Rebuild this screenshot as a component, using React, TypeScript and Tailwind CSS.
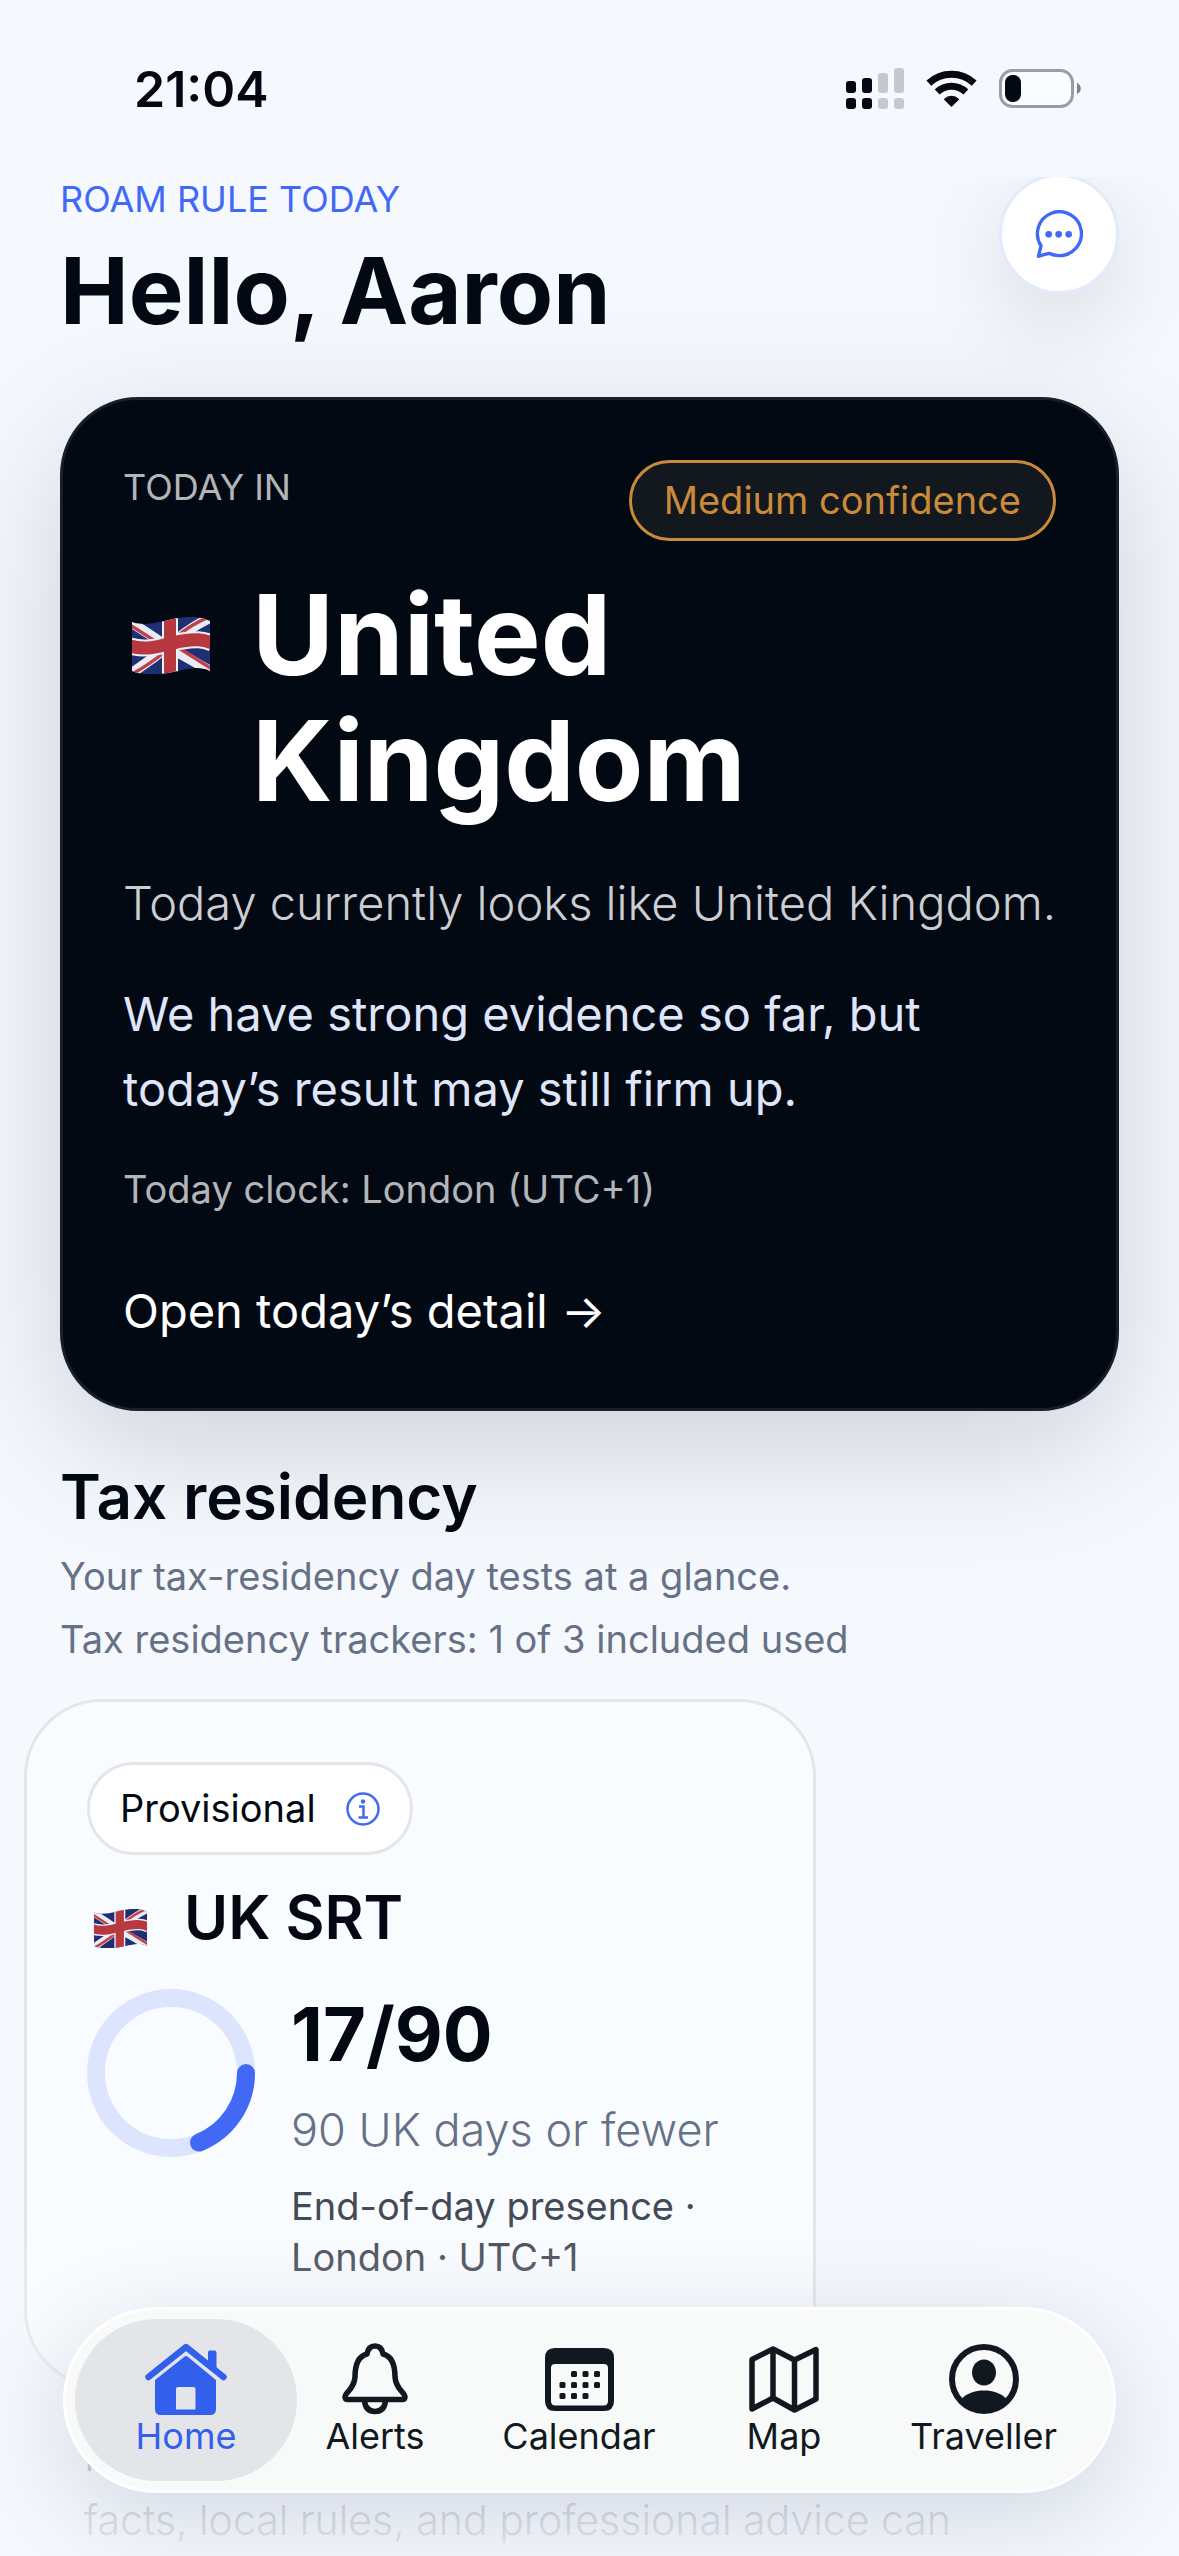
import type { ReactNode } from 'react'

type NavItem = {
  label: string
  href: string
  icon: ReactNode
  active?: boolean
}

const SignalIcon = () => (
  <svg viewBox="0 0 174 123" className="h-[41px] w-[58px]">
    <g fill="#030913">
      <rect x="0" y="39" width="30" height="36" rx="9" />
      <rect x="48" y="30" width="30" height="45" rx="9" />
      <rect x="0" y="90" width="30" height="33" rx="9" />
      <rect x="48" y="90" width="30" height="33" rx="9" />
    </g>
    <g fill="#c6c8cd">
      <rect x="96" y="15" width="30" height="60" rx="9" />
      <rect x="144" y="0" width="30" height="75" rx="9" />
      <rect x="96" y="90" width="30" height="33" rx="9" />
      <rect x="144" y="90" width="30" height="33" rx="9" />
    </g>
  </svg>
)

const WifiIcon = () => (
  <svg viewBox="0 0 153 111" className="h-[37px] w-[51px]">
    <g fill="none" stroke="#030913" strokeWidth="21">
      <path d="M8.500 39.500A100 100 0 0 1 144.500 39.500" />
      <path d="M33.500 66A62 62 0 0 1 119.500 66" />
    </g>
    <path d="M76.500 111L53 87.500Q76.500 67 100 87.500Z" fill="#030913" />
  </svg>
)

const BatteryIcon = () => (
  <svg viewBox="0 0 82 39" className="h-[39px] w-[82px]">
    <rect x="1.500" y="1.500" width="72" height="36" rx="12" fill="#fafcff" stroke="#9a9ca7" strokeWidth="3" />
    <rect x="6" y="6" width="16" height="27" rx="7.500" fill="#030913" />
    <path d="M78 14C83 16 83 23 78 25Z" fill="#7b8190" />
  </svg>
)

const ChatIcon = () => (
  <svg viewBox="0 0 144 144" className="size-12">
    <path
      d="M18 107A66 66 0 1 1 72 137Q56 137 42 130Q28 133 10 139Q15 122 18 107Z"
      fill="none"
      stroke="#4169f5"
      strokeWidth="10"
      strokeLinejoin="round"
    />
    <g fill="#4169f5">
      <circle cx="41" cy="73" r="10" />
      <circle cx="71" cy="73" r="10" />
      <circle cx="101" cy="73" r="10" />
    </g>
  </svg>
)

const InfoIcon = () => (
  <svg viewBox="0 0 34 34" className="size-[34px]" fill="none" stroke="#4169f5">
    <circle cx="17" cy="17" r="15.500" strokeWidth="2.500" />
    <path d="M13 14.500H17.500V25M12.500 25.500H22" strokeWidth="2.500" />
    <circle cx="17" cy="9.500" r="2.200" fill="#4169f5" stroke="none" />
  </svg>
)

const UkFlag = ({ id, className }: { id: string; className: string }) => (
  <svg viewBox="0 0 78 57" className={className} role="img" aria-label="United Kingdom">
    <clipPath id={id}>
      <path d="M0 5C20 12 40 -2 64 0Q72 1 78 4V54C62 46 46 57 24 57Q8 58 0 54Z" />
    </clipPath>
    <g clipPath={`url(#${id})`} fill="none">
      <rect width="78" height="57" fill="#1f2f73" />
      <g stroke="#e9ebf5" strokeWidth="10">
        <path d="M-2 5Q16 16 36 30Q58 42 80 55" />
        <path d="M-2 57Q18 44 38 28Q58 10 80 0" />
      </g>
      <g stroke="#c2404a" strokeWidth="3.500">
        <path d="M-2 8Q14 18 32 30" />
        <path d="M42 28Q58 38 80 52" />
        <path d="M-2 58Q14 50 34 34" />
        <path d="M42 22Q60 6 80 -1" />
      </g>
      <path d="M38 -2V60" stroke="#eef0f7" strokeWidth="16" />
      <path d="M-2 29C18 35 36 26 50 24S70 22 80 26" stroke="#eef0f7" strokeWidth="17" />
      <path d="M38 -2V60" stroke="#b8383f" strokeWidth="12" />
      <path d="M-2 29C18 35 36 26 50 24S70 22 80 26" stroke="#b8383f" strokeWidth="13" />
    </g>
  </svg>
)

const HomeIcon = () => (
  <svg viewBox="0 0 82 73" className="h-[73px] w-[82px]" fill="#325fec">
    <path d="M3.500 34L41 4L78.500 34" fill="none" stroke="#325fec" strokeWidth="6.500" strokeLinecap="round" strokeLinejoin="round" />
    <path d="M63 9.500Q63 7.500 65 7.500H69.500Q71.500 7.500 71.500 9.500V29L63 22Z" />
    <path
      fillRule="evenodd"
      d="M39 14Q41 12 43 14L71 37V66Q71 72 65 72H16Q10 72 10 66V37ZM33 44Q31 44 31 46V66.500H50.500V46Q50.500 44 48.500 44Z"
    />
  </svg>
)

const BellIcon = () => (
  <svg viewBox="0 0 66 72" className="h-[72px] w-[66px]" fill="none" stroke="#121820" strokeWidth="5.500" strokeLinejoin="round">
    <path d="M3 54C3 49 12 47 13 34C13 21 17 13 25 11C26 5 29 3 33 3S40 5 41 11C49 13 53 21 53 34C54 47 63 49 63 54Q63 56.500 60 56.500H6Q3 56.500 3 54Z" />
    <path d="M22.500 57C23 65 27 68.500 33 68.500S43 65 43.500 57" />
  </svg>
)

const calendarDots = [
  [29, 26], [40.5, 26], [52, 26],
  [17.5, 37], [29, 37], [40.5, 37], [52, 37],
  [17.5, 48], [29, 48], [40.5, 48],
]

const CalendarIcon = () => (
  <svg viewBox="0 0 69 63" className="h-[63px] w-[69px]" fill="#121820">
    <path
      fillRule="evenodd"
      d="M10 0H59Q69 0 69 10V53Q69 63 59 63H10Q0 63 0 53V10Q0 0 10 0ZM10 16Q6 16 6 20V53Q6 57.500 10.500 57.500H58.500Q63 57.500 63 53V20Q63 16 59 16Z"
    />
    {calendarDots.map(([x, y]) => (
      <rect key={`${x}-${y}`} x={x - 3} y={y - 3} width="6" height="6" rx="1.500" />
    ))}
  </svg>
)

const MapIcon = () => (
  <svg viewBox="0 0 70 67" className="h-[67px] w-[70px]" fill="none" stroke="#121820" strokeWidth="5.500" strokeLinejoin="round">
    <path d="M3 13.500L24 3L45.500 14L67 3.500V53L45.500 64L24 52L3 63Z" />
    <path d="M24 3V52M45.500 14V64" />
  </svg>
)

const PersonIcon = () => (
  <svg viewBox="0 0 70 70" className="size-[70px]" fill="#121820">
    <circle cx="35" cy="35" r="32" fill="none" stroke="#121820" strokeWidth="6" />
    <ellipse cx="35" cy="28.500" rx="12" ry="13" />
    <path d="M12 56C17 49 26 46.500 35 46.500S53 49 58 56C53 63 44 67 35 67S17 63 12 56Z" />
  </svg>
)

const navItems: NavItem[] = [
  { label: 'Home', href: '#home', icon: <HomeIcon />, active: true },
  { label: 'Alerts', href: '#alerts', icon: <BellIcon /> },
  { label: 'Calendar', href: '#calendar', icon: <CalendarIcon /> },
  { label: 'Map', href: '#map', icon: <MapIcon /> },
  { label: 'Traveller', href: '#traveller', icon: <PersonIcon /> },
]

function StatusBar() {
  return (
    <div className="flex h-[177px] shrink-0 items-center justify-between pr-[98px] pl-[134px]">
      <span className="text-[50px] leading-[60px] font-semibold">21:04</span>
      <div className="flex items-center gap-[22px]">
        <SignalIcon />
        <WifiIcon />
        <BatteryIcon />
      </div>
    </div>
  )
}

function TodayCard() {
  return (
    <section className="rounded-[78px] border-[3px] border-[#1a1e28] bg-[#030913] p-[60px] shadow-[0_36px_130px_rgba(3,9,19,0.16)]">
      <div className="flex items-start justify-between">
        <p className="text-[36px] leading-[54px] text-[#b3b5b9]">TODAY IN</p>
        <span className="rounded-full border-[3px] border-[#c98a3a] bg-[#13181f] px-8 py-3 text-[38px] leading-[51px] text-[#c98a3a]">
          Medium confidence
        </span>
      </div>

      <div className="mt-[30px] flex items-start gap-[42px]">
        <UkFlag id="flag-today" className="mt-[46px] ml-[9px] h-[57px] w-[78px] shrink-0" />
        <h2 className="text-[112px] leading-[126px] font-bold text-white">
          United
          <br />
          Kingdom
        </h2>
      </div>

      <p className="mt-[42px] text-[47px] leading-[75px] font-light text-[#cdced2]">
        Today currently looks like United Kingdom.
      </p>
      <p className="mt-9 text-[47px] leading-[75px] text-[#dfe6fb]">
        We have strong evidence so far, but
        <br />
        today’s result may still firm up.
      </p>
      <p className="mt-9 text-[38px] leading-[54px] text-[#b3b5b9]">Today clock: London (UTC+1)</p>
      <a href="#today" className="mt-[57px] block text-[47px] leading-[75px] text-white">
        Open today’s detail →
      </a>
    </section>
  )
}

function ProgressRing({ value, total }: { value: number; total: number }) {
  const radius = 75
  const length = 2 * Math.PI * radius
  return (
    <svg viewBox="0 0 168 168" className="size-[168px] shrink-0" fill="none" strokeWidth="18">
      <circle cx="84" cy="84" r={radius} stroke="#dce5fd" />
      <circle
        cx="84"
        cy="84"
        r={radius}
        stroke="#4169f5"
        strokeLinecap="round"
        strokeDasharray={`${(length * value) / total} ${length}`}
      />
    </svg>
  )
}

function TrackerCard() {
  return (
    <article className="ml-6 w-[792px] rounded-[78px] border-[3px] border-[#e3e5ea] bg-[#f9fcff] px-[60px] pt-[60px] pb-[102px]">
      <button className="flex items-center gap-[30px] rounded-full border-[3px] border-[#e4e6ec] bg-white px-[30px] py-[18px] text-[38px] leading-[51px]">
        Provisional
        <InfoIcon />
      </button>

      <div className="mt-[26px] flex items-start gap-9">
        <UkFlag id="flag-srt" className="mt-7 ml-[6px] h-[39px] w-[55px] shrink-0" />
        <h3 className="text-[60px] leading-[72px] font-semibold">UK SRT</h3>
      </div>

      <div className="mt-9 flex items-start gap-9">
        <ProgressRing value={17} total={90} />
        <div className="flex flex-col gap-3">
          <p className="text-[74px] leading-[90px] font-bold">17/90</p>
          <p className="text-[45px] leading-[78px] font-light text-[#677186]">90 UK days or fewer</p>
          <p className="text-[38px] leading-[51px] text-[#434955]">
            End-of-day presence ·
            <br />
            London · UTC+1
          </p>
        </div>
      </div>
    </article>
  )
}

function BottomNav() {
  return (
    <nav className="absolute inset-x-[63px] bottom-[63px] grid grid-cols-[222fr_156fr_252fr_158fr_241fr] rounded-full border-[3px] border-white bg-[#f8faf9] p-[9px] shadow-[0_24px_100px_rgba(3,9,40,0.14)]">
      {navItems.map((item) => (
        <a
          key={item.label}
          href={item.href}
          className={
            item.active
              ? 'flex flex-col items-center rounded-full bg-[#e4e5e9] py-6 text-[#325fec]'
              : 'flex flex-col items-center py-6 text-[#121820]'
          }
        >
          <span className="flex h-[72px] items-center">{item.icon}</span>
          <span className="text-[36px] leading-[42px]">{item.label}</span>
        </a>
      ))}
    </nav>
  )
}

export default function App() {
  return (
    <div className="relative flex h-screen flex-col overflow-hidden bg-[#f5f9fe] font-['Inter',sans-serif] text-[#030913]">
      <StatusBar />

      <main className="min-h-0 flex-1 overflow-y-auto [scrollbar-width:none]">
        <div className="-mt-[3px] px-[60px]">
          <header className="flex items-start justify-between">
            <div>
              <p className="text-[36px] leading-[51px] text-[#4169f5]">ROAM RULE TODAY</p>
              <h1 className="mt-3 text-[92px] leading-[108px] font-bold">Hello, Aaron</h1>
            </div>
            <button
              aria-label="Open chat"
              className="flex size-[120px] items-center justify-center rounded-full border-[3px] border-[#e3eafc] bg-white shadow-[0_30px_90px_rgba(3,9,19,0.12)]"
            >
              <ChatIcon />
            </button>
          </header>

          <div className="mt-[52px]">
            <TodayCard />
          </div>

          <h2 className="mt-[50px] text-[62px] leading-[72px] font-semibold">Tax residency</h2>
          <p className="mt-[18px] text-[38px] leading-[51px] text-[#677186]">
            Your tax-residency day tests at a glance.
          </p>
          <p className="mt-3 text-[38px] leading-[51px] text-[#677186]">
            Tax residency trackers: 1 of 3 included used
          </p>
        </div>

        <div className="mt-[34px]">
          <TrackerCard />
        </div>

        <p className="mt-9 px-[84px] text-[41px] leading-[64px] font-light text-[#677186]">
          I
          <br />
          facts, local rules, and professional advice can
        </p>
      </main>

      {/* content fades out behind the tab bar */}
      <div className="pointer-events-none absolute inset-x-0 bottom-0 h-[340px] bg-linear-to-b from-[#f5f9fe]/0 to-[#f5f9fe]/90" />
      <BottomNav />
    </div>
  )
}
